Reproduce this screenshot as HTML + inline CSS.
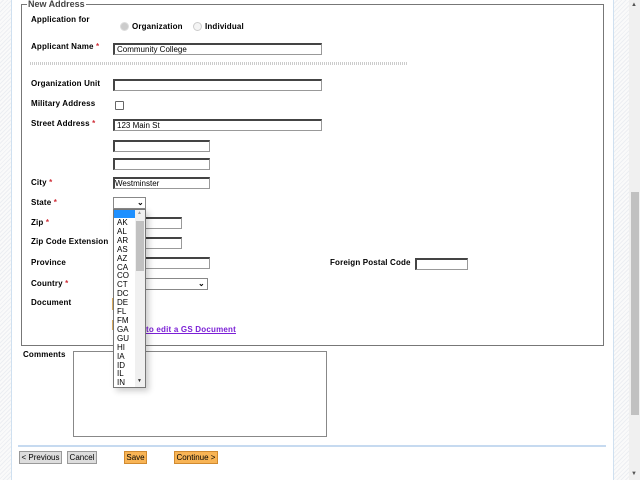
<!DOCTYPE html>
<html><head><meta charset="utf-8"><style>
*{margin:0;padding:0;box-sizing:border-box}
body{width:640px;height:480px;overflow:hidden;position:relative;background:#fff;font-family:"Liberation Sans",sans-serif;font-size:8px;color:#000}
.hatch{position:absolute;top:0;height:480px;background:repeating-linear-gradient(135deg,#fafafa 0 2px,#eceef2 2px 3px)}
.a{position:absolute;white-space:nowrap}
.lbl{position:absolute;font-weight:bold;font-size:8px;letter-spacing:0.15px;white-space:nowrap}
.req{color:#d0303a}
.in{position:absolute;border:1px solid #999;border-top:2px solid #444;border-left:2px solid #444;background:#fff;font-size:8px;padding-left:2px;line-height:9px;height:12px}
.sel{position:absolute;border:1px solid #888;background:#fff;height:12px}
.btn{position:absolute;top:451px;height:13px;font-size:8px;line-height:11px;text-align:center;border:1px solid #999}
.g{background:#ddd}
.o{background:#f8b455;border-color:#d08a30}
</style></head><body>
<div class="hatch" style="left:0;width:11px"></div>
<div class="hatch" style="left:614px;width:15px"></div>
<div class="a" style="left:11px;top:0;width:1px;height:480px;background:#cfe0f0"></div>
<div class="a" style="left:613px;top:0;width:1px;height:480px;background:#cfe0f0"></div>
<div class="a" style="left:629px;top:0;width:11px;height:480px;background:#f0f0f0"></div>
<div class="a" style="left:631px;top:192px;width:8px;height:223px;background:#c1c1c1"></div>
<div class="a" style="left:631px;top:2px;font-size:6px;color:#555">▲</div>
<div class="a" style="left:631px;top:471px;font-size:6px;color:#555">▼</div>

<div class="a" style="left:21px;top:4px;width:583px;height:342px;border:1px solid #777"></div>
<div class="a" style="left:27px;top:-1px;background:#fff;padding:0 1px;font-weight:bold;font-size:9px;color:#444">New Address</div>

<div class="lbl" style="left:31px;top:15px">Application for</div>
<div class="a" style="left:120px;top:22px;width:9px;height:9px;border-radius:50%;background:#ccc;border:1px solid #ddd"></div>
<div class="lbl" style="left:132px;top:22px">Organization</div>
<div class="a" style="left:193px;top:22px;width:9px;height:9px;border-radius:50%;background:#f4f4f4;border:1px solid #ccc"></div>
<div class="lbl" style="left:205px;top:22px">Individual</div>

<div class="lbl" style="left:31px;top:42px">Applicant Name <span class="req">*</span></div>
<div class="in" style="left:113px;top:43px;width:209px">Community College</div>
<div class="a" style="left:30px;top:62px;width:378px;height:3px;background:repeating-linear-gradient(90deg,#ccc 0 1px,transparent 1px 2px)"></div>

<div class="lbl" style="left:31px;top:79px">Organization Unit</div>
<div class="in" style="left:113px;top:79px;width:209px"></div>
<div class="lbl" style="left:31px;top:99px">Military Address</div>
<div class="a" style="left:115px;top:101px;width:9px;height:9px;border:1px solid #666;border-radius:1px"></div>
<div class="lbl" style="left:31px;top:119px">Street Address <span class="req">*</span></div>
<div class="in" style="left:113px;top:119px;width:209px">123 Main St</div>
<div class="in" style="left:113px;top:140px;width:97px"></div>
<div class="in" style="left:113px;top:158px;width:97px"></div>
<div class="lbl" style="left:31px;top:178px">City <span class="req">*</span></div>
<div class="in" style="left:113px;top:177px;width:97px;padding-left:0">Westminster</div>
<div class="lbl" style="left:31px;top:198px">State <span class="req">*</span></div>
<div class="sel" style="left:113px;top:197px;width:33px"><span class="a" style="left:23px;top:0;font-size:8px;font-weight:bold">⌄</span></div>
<div class="lbl" style="left:31px;top:218px">Zip <span class="req">*</span></div>
<div class="in" style="left:113px;top:217px;width:69px"></div>
<div class="lbl" style="left:31px;top:237px">Zip Code Extension</div>
<div class="in" style="left:113px;top:237px;width:69px"></div>
<div class="lbl" style="left:31px;top:258px">Province</div>
<div class="in" style="left:113px;top:257px;width:97px"></div>
<div class="lbl" style="left:330px;top:258px">Foreign Postal Code</div>
<div class="in" style="left:415px;top:258px;width:53px"></div>
<div class="lbl" style="left:31px;top:279px">Country <span class="req">*</span></div>
<div class="sel" style="left:113px;top:278px;width:95px"><span class="a" style="left:84px;top:0;font-weight:bold">⌄</span></div>
<div class="lbl" style="left:31px;top:298px">Document</div>
<div class="a" style="left:112px;top:298px;width:2px;height:12px;background:#e0b060"></div>
<div class="a" style="left:112px;top:320px;width:2px;height:10px;background:#e0b060"></div>
<div class="a" style="left:146px;top:325px;color:#7b1fd6;text-decoration:underline;font-weight:bold;letter-spacing:0.2px">to edit a GS Document</div>

<div class="lbl" style="left:23px;top:350px">Comments</div>
<div class="a" style="left:73px;top:351px;width:254px;height:86px;border:1px solid #888"></div>
<div class="a" style="left:18px;top:445px;width:588px;height:2px;background:#c6daf0"></div>
<div class="btn g" style="left:19px;width:43px">&lt; Previous</div>
<div class="btn g" style="left:67px;width:30px">Cancel</div>
<div class="btn o" style="left:124px;width:23px">Save</div>
<div class="btn o" style="left:174px;width:44px">Continue &gt;</div>

<div class="a" style="left:113px;top:209px;width:33px;height:179px;background:#fff;border:1px solid #777;box-shadow:3px 3px 6px rgba(0,0,0,0.2);overflow:hidden">
 <div class="a" style="left:0;top:0;width:21px;height:8px;background:#1e90ff"></div>
 <div class="a" style="left:21px;top:0;width:10px;height:177px;background:#f0f0f0"></div>
 <div class="a" style="left:22px;top:11px;width:8px;height:50px;background:#c1c1c1"></div>
 <div class="a" style="left:23px;top:0;font-size:5px;color:#999">▲</div>
 <div class="a" style="left:23px;top:168px;font-size:5px;color:#333">▼</div>
 <div class="a" style="left:3px;top:9px;font-size:8px;line-height:8.9px">AK<br>AL<br>AR<br>AS<br>AZ<br>CA<br>CO<br>CT<br>DC<br>DE<br>FL<br>FM<br>GA<br>GU<br>HI<br>IA<br>ID<br>IL<br>IN</div>
</div>
</body></html>
